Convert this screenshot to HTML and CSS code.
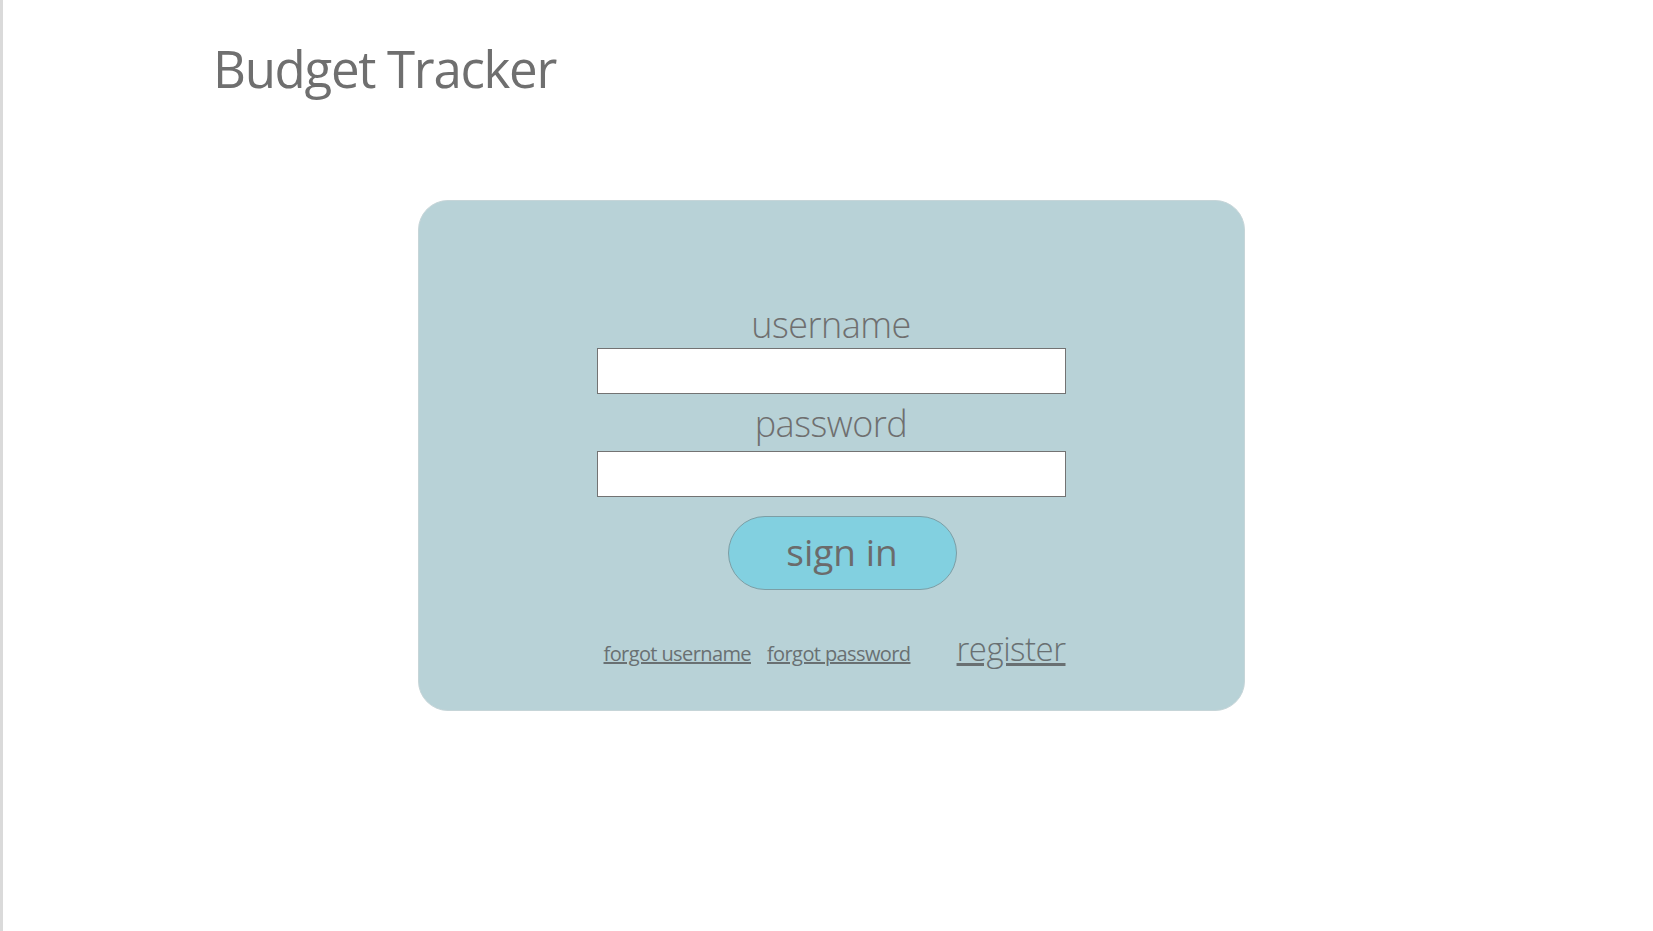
FILE: index.html
```html
<!doctype html>
<html lang="en">
  <head>
    <meta charset="UTF-8" />
    <meta name="viewport" content="width=device-width, initial-scale=1.0" />
    <title>Budget Tracker</title>
    <link rel="stylesheet" href="styles.css">
  </head>
  <body>
    <header class="top">
      <h1 class="brand">Budget Tracker</h1>
    </header>
    <main class="page">
      <form class="card" onsubmit="return false">
        <div class="fields">
          <label class="label" for="username">username</label>
          <input class="field" id="username" type="text" />
          <label class="label label-pass" for="password">password</label>
          <input class="field" id="password" type="password" />
          <button class="sign-in" type="submit">sign in</button>
          <div class="links">
            <a class="small-link" href="#">forgot username</a>
            <a class="small-link" href="#">forgot password</a>
            <a class="register" href="#">register</a>
          </div>
        </div>
      </form>
    </main>
  </body>
</html>
```

FILE: styles.css
```css
html,
body {
  margin: 0;
}
body {
  min-height: 100vh;
  box-sizing: border-box;
  border-left: 3px solid #dadada;
  background: #fff;
  font-family: "Open Sans", "Liberation Sans", sans-serif;
  color: #6f6f6f;
}
.top {
  padding: 32px 0 0 210px;
}
.brand {
  margin: 0;
  font-size: 51px;
  font-weight: 400;
  letter-spacing: -1.3px;
  line-height: 72px;
}
.page {
  padding: 96px 0 0 6px;
}
.card {
  width: 827px;
  height: 511px;
  margin: 0 auto;
  box-sizing: border-box;
  background: #b8d2d7;
  border: 1px solid #c6d5d8;
  border-radius: 30px;
  display: flex;
  justify-content: center;
}
.fields {
  width: 469px;
  padding-top: 101px;
  display: flex;
  flex-direction: column;
  align-items: center;
}
.label {
  font-size: 36px;
  font-weight: 300;
  line-height: 46px;
  letter-spacing: -0.5px;
}
.label-pass {
  margin-bottom: 4px;
}
.field {
  width: 100%;
  height: 46px;
  box-sizing: border-box;
  margin: 0 0 7px;
  border: 1px solid #737373;
  background: #fff;
  font-family: inherit;
  font-size: 20px;
  padding: 0 10px;
}
.sign-in {
  align-self: flex-start;
  margin: 12px 0 0 131px;
  width: 229px;
  height: 74px;
  border: 1px solid #7c9ea5;
  border-radius: 37px;
  background: #82d0e0;
  color: #6b6b6b;
  font-family: inherit;
  font-size: 37px;
  font-weight: 400;
  padding: 0 0 4px;
}
.links {
  width: 100%;
  margin-top: 36px;
  display: flex;
  align-items: baseline;
  gap: 16px;
}
.small-link {
  color: #697072;
  font-size: 20px;
  letter-spacing: -0.6px;
}
.small-link:first-child {
  margin-left: 7px;
}
.register {
  margin-left: auto;
  color: #697072;
  font-size: 33px;
  font-weight: 300;
  letter-spacing: -0.5px;
}
```
